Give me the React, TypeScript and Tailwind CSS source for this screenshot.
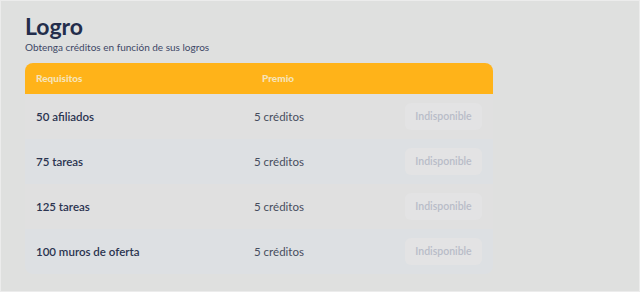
export default function App() {
  const rows = [
    { req: "50 afiliados", alt: false },
    { req: "75 tareas", alt: true },
    { req: "125 tareas", alt: false },
    { req: "100 muros de oferta", alt: true },
  ]

  return (
    <div className="h-[292px] w-[640px] border border-[#ececec] bg-[#dfe0df] font-['Lato','Noto_Sans',sans-serif]">
      <div className="px-6 pt-[12px]">
        {/* Heading */}
        <h1 className="text-[23px] font-bold leading-[26px] text-[#232d4b]">Logro</h1>
        <p className="mt-[1px] text-[10px] leading-[14px] text-[#3d4766]">Obtenga créditos en función de sus logros</p>

        {/* Table */}
        <div className="mt-[9px] w-[468px] overflow-hidden rounded-lg">
          <div className="flex h-[31px] items-center bg-[#ffb319] pl-[11px] text-[10px] font-black text-[#f6e3b8]">
            <div className="w-[226px]">Requisitos</div>
            <div>Premio</div>
          </div>
          {rows.map((r) => (
            <div
              key={r.req}
              className={`flex h-[45px] items-center pl-[11px] pr-[11px] ${r.alt ? "bg-[#dde0e3]" : "bg-[#e0e0e0]"}`}
            >
              <div className="w-[218px] text-[11.5px] font-semibold text-[#2b3450]">{r.req}</div>
              <div className="flex-1 text-[11.5px] text-[#474d5e]">5 créditos</div>
              <div className="flex h-[27px] w-[77px] items-center justify-center rounded-md bg-[#e3e3e4] text-[10.5px] font-semibold text-[#b8bcc8]">
                Indisponible
              </div>
            </div>
          ))}
        </div>
      </div>
    </div>
  )
}
